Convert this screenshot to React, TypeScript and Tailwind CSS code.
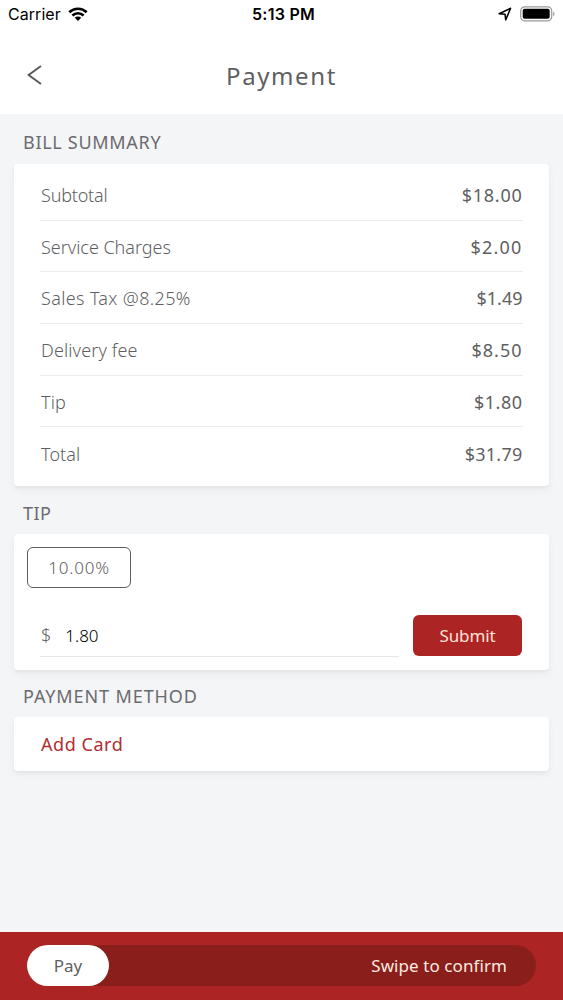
import type { ReactNode } from "react";

const rows = [
  { label: "Subtotal", amount: "$18.00", labelTrack: "tracking-[-0.2px]", amountTrack: "tracking-[0.75px]" },
  { label: "Service Charges", amount: "$2.00", labelTrack: "tracking-[-0.03px]", amountTrack: "tracking-[1.2px]" },
  { label: "Sales Tax @8.25%", amount: "$1.49", labelTrack: "tracking-[0.36px]", amountTrack: "tracking-[0px]" },
  { label: "Delivery fee", amount: "$8.50", labelTrack: "tracking-[0.12px]", amountTrack: "tracking-[1px]" },
  { label: "Tip", amount: "$1.80", labelTrack: "tracking-[0.1px]", amountTrack: "tracking-[0.5px]" },
  { label: "Total", amount: "$31.79", labelTrack: "tracking-[0.1px]", amountTrack: "tracking-[0.25px]" },
];

function SectionTitle({ children, className }: { children: ReactNode; className: string }) {
  return <h2 className={`pl-[23px] text-[18px] leading-6 text-[#6b6b6f] ${className}`}>{children}</h2>;
}

function Card({ children, className }: { children: ReactNode; className: string }) {
  return (
    <section
      className={`mx-[14px] rounded-[4px] bg-white shadow-[0_2px_3px_rgba(0,0,0,0.04),0_4px_10px_rgba(0,0,0,0.04)] ${className}`}
    >
      {children}
    </section>
  );
}

function StatusBar() {
  return (
    <div className="grid h-[29px] grid-cols-3 items-center px-2 font-['Inter',sans-serif] text-[16px] leading-none text-black">
      <div className="-mt-px flex items-center gap-[7px]">
        <span className="tracking-[0.05px]">Carrier</span>
        <svg width="20" height="15" viewBox="0 0 20 15" fill="none" stroke="black" strokeWidth="2.7">
          <path d="M1.3 5.2C6.2.6 13.8.6 18.7 5.2" />
          <path d="M4.4 8.5c3.2-3 8-3 11.2 0" />
          <path d="M6.8 10.8 10 14l3.2-3.2c-1.8-1.7-4.6-1.7-6.4 0Z" fill="black" stroke="none" />
        </svg>
      </div>
      <span className="-mt-px justify-self-center pl-[4px] font-semibold tracking-[0.25px] whitespace-nowrap">5:13 PM</span>
      <div className="-mt-px flex items-center justify-end gap-[8px]">
        <svg width="14" height="14" viewBox="0 0 14 14" fill="none" stroke="black" strokeWidth="1.5" strokeLinejoin="round">
          <path d="M1.1 6.8 12.6 1.3 7.7 12.9 7 7.2Z" />
        </svg>
        <svg width="35" height="16" viewBox="0 0 35 16">
          <rect x=".7" y=".8" width="31" height="14" rx="4" fill="white" stroke="#999" strokeWidth="1.2" />
          <rect x="2.7" y="2.8" width="27" height="10" rx="2" fill="black" />
          <path d="M33.2 5.5c1.8.8 1.8 4 0 4.8Z" fill="#999" />
        </svg>
      </div>
    </div>
  );
}

export default function App() {
  return (
    <div className="flex h-[1000px] w-[563px] flex-col overflow-hidden bg-[#f4f5f7] font-['Noto_Sans',sans-serif] text-[#5f5f63]">
      <header className="h-[114px] shrink-0 bg-white">
        <StatusBar />
        <div className="grid h-[85px] grid-cols-[60px_1fr_60px] items-center pt-[9px]">
          <svg width="16" height="22" viewBox="0 0 16 22" fill="none" stroke="#57575a" strokeWidth="1.9" className="mb-[3px] ml-[27px]">
            <path d="M14 2 1.6 11 14 20" />
          </svg>
          <h1 className="text-center text-[24px] leading-8 tracking-[1.6px]">Payment</h1>
        </div>
      </header>

      <SectionTitle className="mt-[16px] mb-[10px] tracking-[0.7px]">BILL SUMMARY</SectionTitle>
      <Card className="h-[322px] shrink-0 pt-[5px]">
        <div className="mx-[26px]">
          {rows.map((row) => (
            <div
              key={row.label}
              className="flex h-[51.65px] items-center justify-between border-b border-[#ececee] pt-[1.5px] pr-[0.5px] pl-[1px] text-[18px] leading-6 last:border-0"
            >
              <span className={`font-light ${row.labelTrack}`}>{row.label}</span>
              <span className={row.amountTrack}>{row.amount}</span>
            </div>
          ))}
        </div>
      </Card>

      <SectionTitle className="mt-[15px] mb-[9px] tracking-[0.5px]">TIP</SectionTitle>
      <Card className="h-[136px] shrink-0 pt-[13px]">
        <button className="ml-[13px] flex h-[41px] w-[104px] items-center justify-center rounded-[6px] border-[1.5px] border-[#5d5d60] text-[17px] font-light tracking-[0.8px]">
          10.00%
        </button>
        <div className="mt-[27px] flex items-start justify-between pr-[27px] pl-[26px]">
          <div className="flex h-[42px] w-[359px] items-center gap-[14px] border-b border-[#e8e8ea] pl-[1px] text-[17px]">
            <span className="text-[18px] font-light">$</span>
            <span className="font-light text-black">1.80</span>
          </div>
          <button className="h-[41px] w-[109px] rounded-[6px] bg-[#ac2424] text-[17px] leading-6 tracking-[-0.1px] text-[#ffe2da]">
            Submit
          </button>
        </div>
      </Card>

      <SectionTitle className="mt-[14px] mb-[9px] tracking-[0.9px]">PAYMENT METHOD</SectionTitle>
      <Card className="flex h-[54px] shrink-0 items-center pl-[27px]">
        <button className="text-[18px] leading-6 tracking-[0.55px] text-[#b02e32]">Add Card</button>
      </Card>

      <footer className="mt-auto h-[68px] shrink-0 bg-[#ac2424] px-[27px] pt-[13px]">
        <div className="flex h-[41px] items-center justify-between rounded-full bg-[#891e1b] pr-[29px]">
          <button className="h-[41px] w-[82px] rounded-full bg-white pt-px text-[17px] leading-6">Pay</button>
          <span className="pt-px text-[17px] leading-6 tracking-[0.08px] text-[#ffeae0]">Swipe to confirm</span>
        </div>
      </footer>
    </div>
  );
}
